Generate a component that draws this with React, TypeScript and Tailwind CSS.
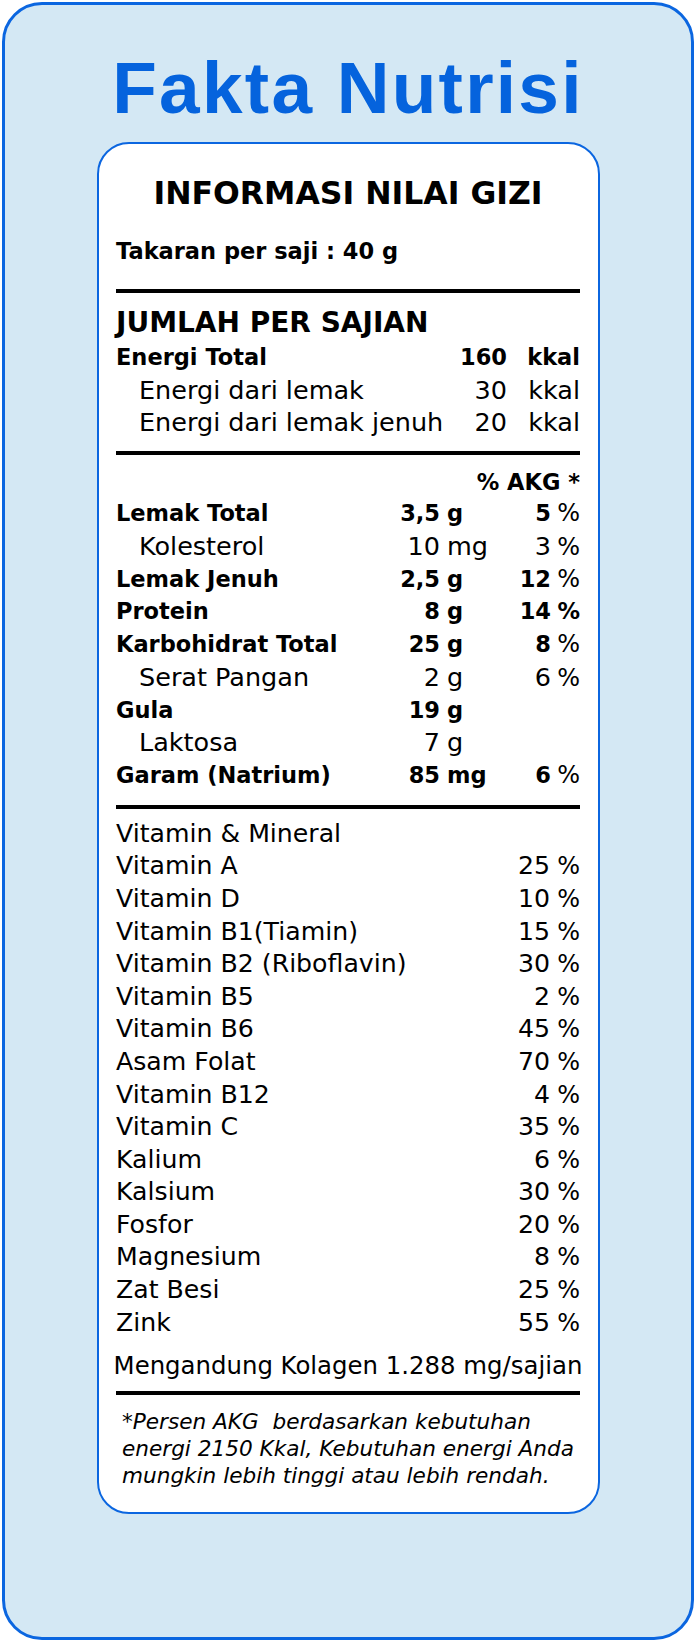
import React from "react";

type Nut = { label: string; bold: boolean; num: string; unit: string; pct: string; pctBold?: boolean };

const nutrients: Nut[] = [
  { label: "Lemak Total", bold: true, num: "3,5", unit: "g", pct: "5" },
  { label: "Kolesterol", bold: false, num: "10", unit: "mg", pct: "3" },
  { label: "Lemak Jenuh", bold: true, num: "2,5", unit: "g", pct: "12" },
  { label: "Protein", bold: true, num: "8", unit: "g", pct: "14", pctBold: true },
  { label: "Karbohidrat Total", bold: true, num: "25", unit: "g", pct: "8" },
  { label: "Serat Pangan", bold: false, num: "2", unit: "g", pct: "6" },
  { label: "Gula", bold: true, num: "19", unit: "g", pct: "" },
  { label: "Laktosa", bold: false, num: "7", unit: "g", pct: "" },
  { label: "Garam (Natrium)", bold: true, num: "85", unit: "mg", pct: "6" },
];

const vitamins: [string, string][] = [
  ["Vitamin A", "25"],
  ["Vitamin D", "10"],
  ["Vitamin B1(Tiamin)", "15"],
  ["Vitamin B2 (Riboflavin)", "30"],
  ["Vitamin B5", "2"],
  ["Vitamin B6", "45"],
  ["Asam Folat", "70"],
  ["Vitamin B12", "4"],
  ["Vitamin C", "35"],
  ["Kalium", "6"],
  ["Kalsium", "30"],
  ["Fosfor", "20"],
  ["Magnesium", "8"],
  ["Zat Besi", "25"],
  ["Zink", "55"],
];

function Rule({ mt }: { mt: string }) {
  return <div className={`h-[4px] bg-black ${mt}`} />;
}

export default function App() {
  return (
    <div className="w-[696px] h-[1642px] p-[2px] bg-white font-['DejaVu_Sans',sans-serif] text-black">
      <div className="h-[1638px] rounded-[40px] border-[3px] border-[#0b66e0] bg-[#d4e8f4] flex flex-col items-center">
        <h1 className="pt-[46px] text-[73px] leading-[73px] font-bold tracking-[2.25px] text-[#0563dd] font-['Liberation_Sans',Arial,sans-serif] whitespace-nowrap">
          Fakta Nutrisi
        </h1>
        <div className="mt-[18px] w-[503px] rounded-[32px] border-2 border-[#0b66e0] bg-white px-[17.5px] pt-[29px] pb-[23px]">
          <div className="text-center text-[31.5px] leading-[40px] font-bold whitespace-nowrap">
            INFORMASI NILAI GIZI
          </div>
          <div className="mt-[23px] text-[22.5px] leading-[30px] font-bold whitespace-nowrap">
            Takaran per saji : 40 g
          </div>
          <Rule mt="mt-[23px]" />
          <div className="mt-[11px] text-[28px] leading-[37px] font-bold whitespace-nowrap">
            JUMLAH PER SAJIAN
          </div>
          <div className="flex h-[32.5px] leading-[32.5px] text-[22.5px] font-bold whitespace-nowrap">
            <span className="flex-1">Energi Total</span>
            <span className="w-[60px] text-right">160</span>
            <span className="w-[73px] text-right">kkal</span>
          </div>
          <div className="flex h-[32.5px] leading-[32.5px] text-[25.5px] whitespace-nowrap">
            <span className="flex-1 pl-[23px]">Energi dari lemak</span>
            <span className="w-[60px] text-right">30</span>
            <span className="w-[73px] text-right">kkal</span>
          </div>
          <div className="flex h-[32.5px] leading-[32.5px] text-[25.5px] whitespace-nowrap">
            <span className="flex-1 pl-[23px]">Energi dari lemak jenuh</span>
            <span className="w-[60px] text-right">20</span>
            <span className="w-[73px] text-right">kkal</span>
          </div>
          <Rule mt="mt-[12.5px]" />
          <div className="mt-[12px] text-right text-[22.5px] leading-[30px] font-bold whitespace-nowrap">
            % AKG *
          </div>
          <div className="flex flex-col">
            {nutrients.map((n) => (
              <div
                key={n.label}
                className={`flex h-[32.75px] leading-[32.75px] whitespace-nowrap ${
                  n.bold ? "text-[22.5px] font-bold" : "text-[25.5px] font-normal"
                }`}
              >
                <span className={`flex-1 ${n.bold ? "" : "pl-[23px]"}`}>{n.label}</span>
                <span className="w-[80px] text-right">{n.num}</span>
                <span className="w-[60px] pl-[7px]">{n.unit}</span>
                <span className="w-[80px] flex justify-end items-baseline">
                  {n.pct && (
                    <>
                      <span className={n.pctBold || n.bold ? "font-bold" : ""}>{n.pct}</span>
                      <span
                        className={`w-[29px] text-right ${
                          n.pctBold ? "font-bold text-[22.5px]" : "font-normal text-[24px]"
                        }`}
                      >
                        %
                      </span>
                    </>
                  )}
                </span>
              </div>
            ))}
          </div>
          <Rule mt="mt-[13px]" />
          <div className="mt-[9px] flex flex-col text-[25.2px] whitespace-nowrap">
            <div className="h-[32.6px] leading-[32.6px]">Vitamin &amp; Mineral</div>
            {vitamins.map(([name, pct]) => (
              <div key={name} className="flex items-baseline h-[32.6px] leading-[32.6px]">
                <span className="flex-1">{name}</span>
                <span>{pct}</span>
                <span className="w-[30px] text-right text-[24px]">%</span>
              </div>
            ))}
          </div>
          <div className="mt-[11px] -mx-[10px] text-center text-[24.4px] leading-[32px] whitespace-nowrap">
            Mengandung Kolagen 1.288 mg/sajian
          </div>
          <Rule mt="mt-[8.5px]" />
          <p className="mt-[13px] pl-[6px] italic text-[21.6px] leading-[27px] whitespace-nowrap">
            *Persen AKG&nbsp; berdasarkan kebutuhan
            <br />
            energi 2150 Kkal, Kebutuhan energi Anda
            <br />
            mungkin lebih tinggi atau lebih rendah.
          </p>
        </div>
      </div>
    </div>
  );
}
